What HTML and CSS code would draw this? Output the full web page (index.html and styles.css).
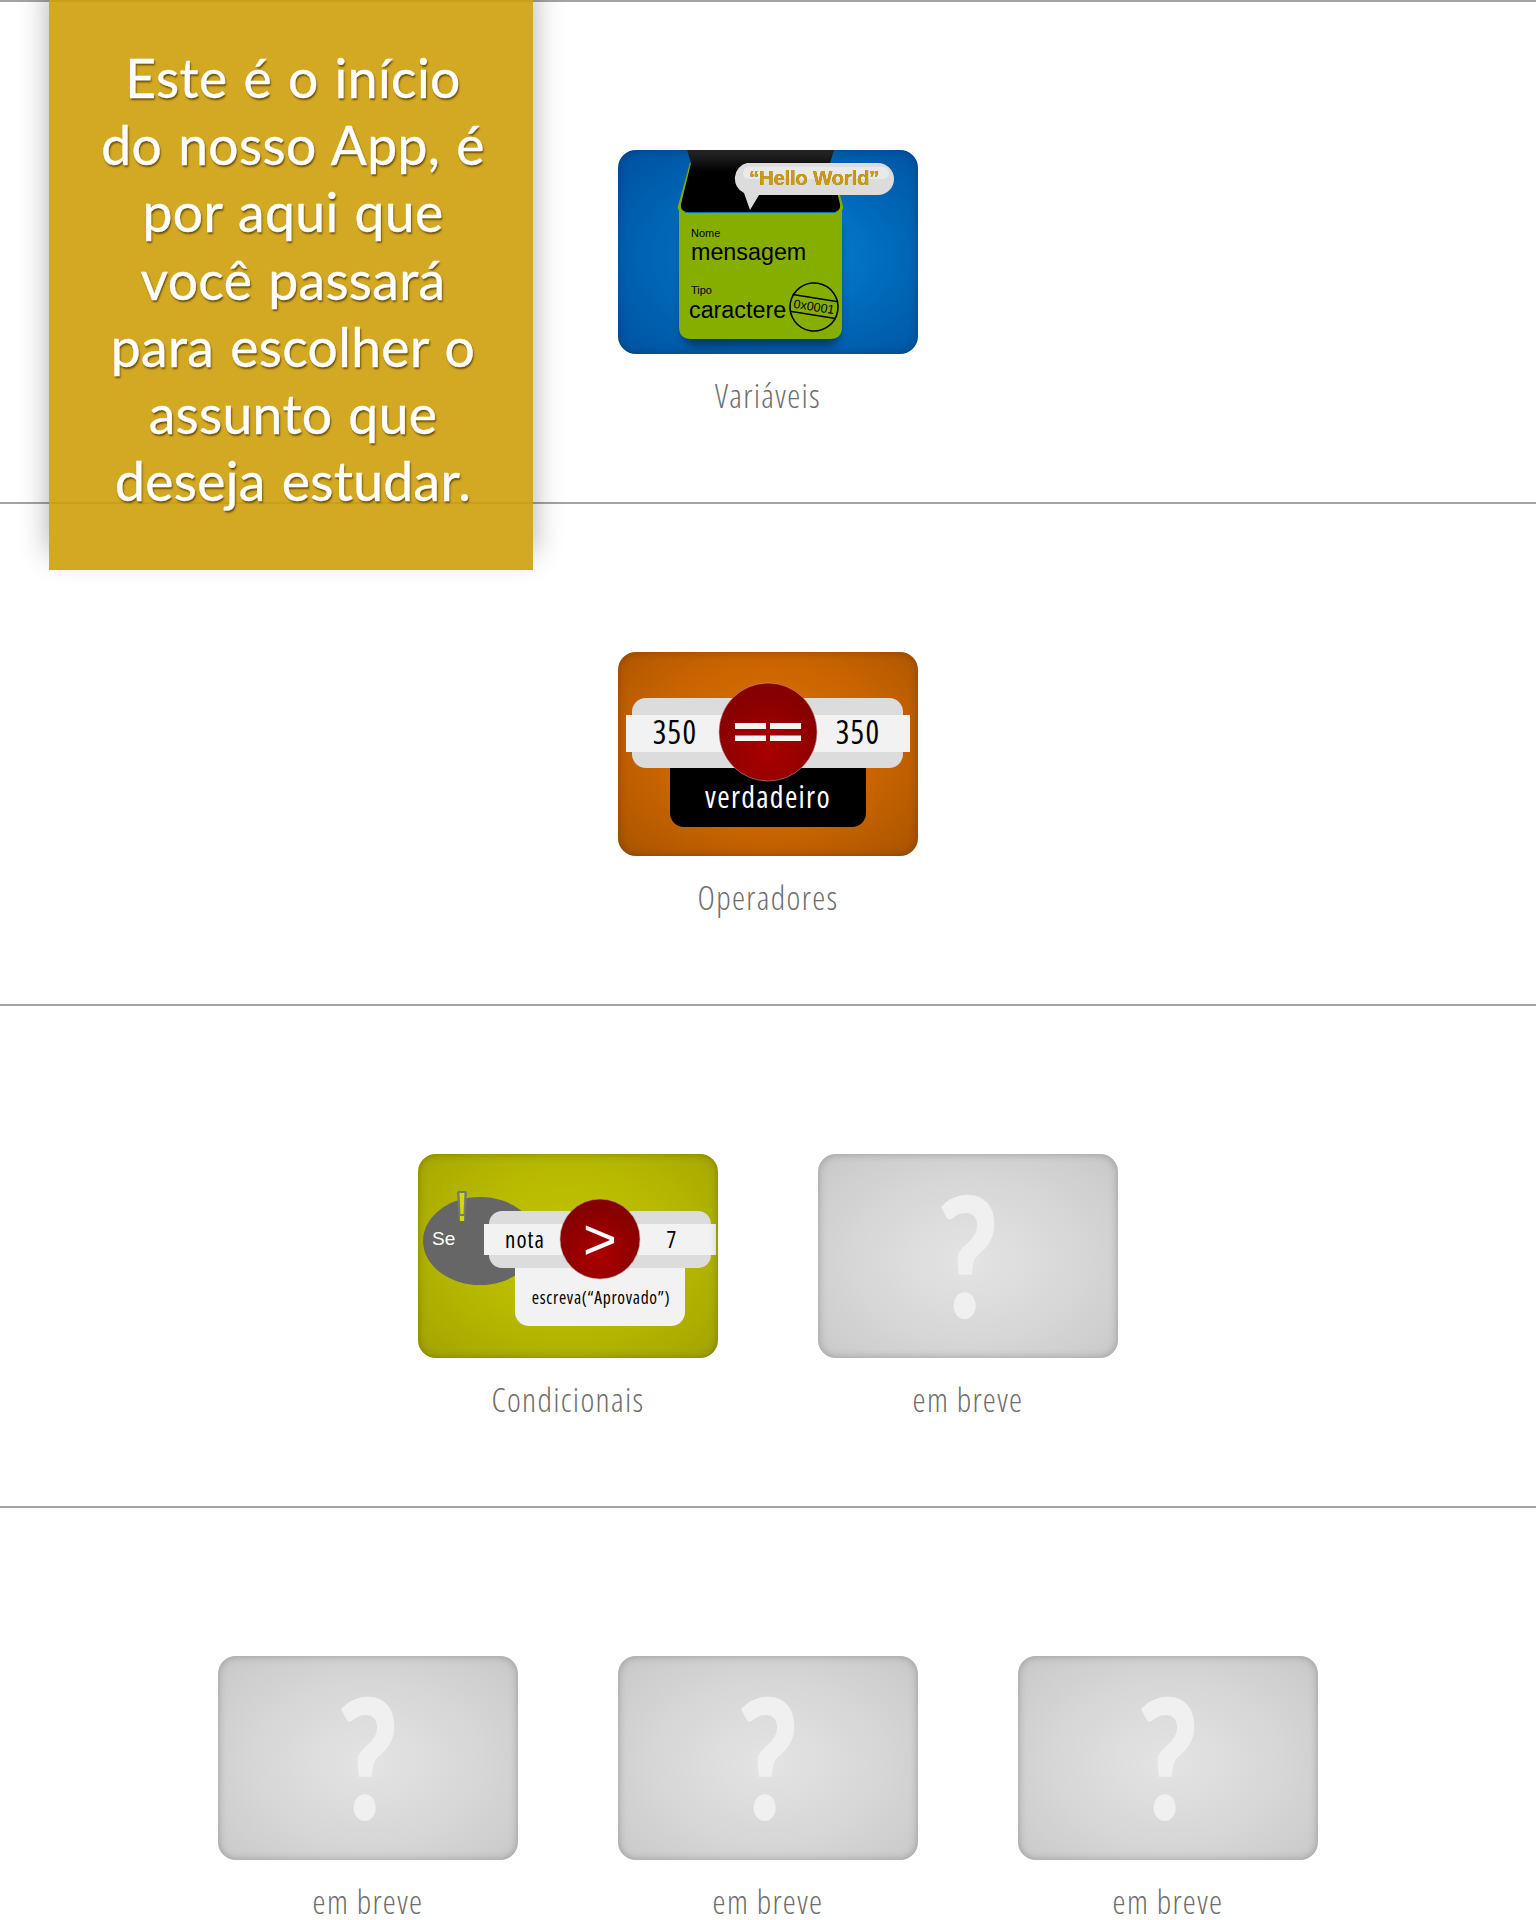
FILE: index.html
```html
<!DOCTYPE html>
<html lang="pt">
<head>
<meta charset="utf-8">
<title>Início</title>
<link rel="stylesheet" href="styles.css">
</head>
<body>
<div class="page">
  <aside class="intro">Este é o início<br>do nosso App, é<br>por aqui que<br>você passará<br>para escolher o<br>assunto que<br>deseja estudar.</aside>

  <section class="row">
    <div class="item">
      <div class="thumb thumb-blue">
        <svg class="art" viewBox="0 0 300 204">
          <defs>
            <linearGradient id="sackTop" x1="0" y1="0" x2="0" y2="1"><stop offset="0" stop-color="#2a2a2a"/><stop offset=".35" stop-color="#000"/></linearGradient>
            <filter id="soft" x="-20%" y="-20%" width="140%" height="140%"><feGaussianBlur stdDeviation="4"/></filter>
          </defs>
          <rect x="64" y="72" width="158" height="124" rx="14" fill="#002a55" opacity=".75" filter="url(#soft)"/>
          <path d="M72 13 L60 56 Q59 60 63 62 L222 62 Q226 60 225 56 L215 20 L200 20 L72 13 Z" fill="#86ae00"/>
          <path d="M69 0 L216 0 L212 13 L222 54 Q223 60 217 62 L68 62 Q62 60 63 54 L73 13 Z" fill="url(#sackTop)"/>
          <path d="M61 58 Q63 63 72 63 L213 63 Q222 63 224 58 L224 177 Q224 189 212 189 L73 189 Q61 189 61 177 Z" fill="#86ae00"/>
          <path d="M129 13 L260 13 A16 16 0 0 1 260 45 L141 45 L132 60 L126 43 A16 16 0 0 1 129 13 Z" fill="#dcdcdc"/>
          <rect x="125" y="17" width="146" height="12" rx="6" fill="#e9e9e9"/>
          <text class="t-sans t-hello" x="196" y="35">“Hello World”</text>
          <text class="t-sans t-small" x="73" y="87">Nome</text>
          <text class="t-sans t-big" x="73" y="110">mensagem</text>
          <text class="t-sans t-small" x="73" y="144">Tipo</text>
          <text class="t-sans t-big" x="71" y="168">caractere</text>
          <g transform="rotate(9 196 157)">
            <circle cx="196" cy="157" r="24" fill="none" stroke="#000" stroke-width="1.6"/>
            <path d="M173 148 H219 M173 165 H219" stroke="#000" stroke-width="1.5"/>
            <text class="t-narrow t-addr" x="196" y="161">0x0001</text>
          </g>
        </svg>
      </div>
      <p class="label">Variáveis</p>
    </div>
  </section>

  <section class="row">
    <div class="item">
      <div class="thumb thumb-orange">
        <svg class="art" viewBox="0 0 300 204">
          <defs>
            <radialGradient id="red" cx=".5" cy=".7" r=".6"><stop offset="0" stop-color="#ab0000"/><stop offset="1" stop-color="#860000"/></radialGradient>
          </defs>
          <path d="M52 110 H248 V161 A14 14 0 0 1 234 175 H66 A14 14 0 0 1 52 161 Z" fill="#000"/>
          <rect x="14" y="46" width="271" height="70" rx="14" fill="#dcdcdc"/>
          <rect x="8" y="63" width="284" height="37" fill="#f2f2f2"/>
          <circle class="disc" cx="150" cy="80" r="49" fill="url(#red)"/>
          <path d="M117 71 H148 V77 H117 Z M152 71 H183 V77 H152 Z M117 83.500 H148 V89 H117 Z M152 83.500 H183 V89 H152 Z" fill="#f4f4f4"/>
          <text class="t-cond t-num" x="57" y="92">350</text>
          <text class="t-cond t-num" x="240" y="92">350</text>
          <text class="t-cond t-true" x="150" y="156">verdadeiro</text>
        </svg>
      </div>
      <p class="label">Operadores</p>
    </div>
  </section>

  <section class="row">
    <div class="item">
      <div class="thumb thumb-olive">
        <svg class="art" viewBox="0 0 300 204">
          <ellipse cx="62" cy="87" rx="57" ry="44" fill="#666"/>
          <path d="M41 37 H47 Q49 37 49 39 L47 67 H41 L39 39 Q39 37 41 37 Z" fill="#777"/>
          <path d="M41.500 39 H46.500 L45.500 60 H42.500 Z M42 62 H46 V67 H42 Z" fill="#d6d900"/>
          <text class="t-sans t-se" x="14" y="91">Se</text>
          <path d="M97 110 H267 V158 A14 14 0 0 1 253 172 H111 A14 14 0 0 1 97 158 Z" fill="#f2f2f2"/>
          <rect x="71" y="57" width="222" height="57" rx="13" fill="#dcdcdc"/>
          <rect x="66" y="70" width="232" height="31" fill="#f2f2f2"/>
          <circle class="disc" cx="182" cy="85" r="40" fill="url(#red)"/>
          <text class="t-sans t-gt" x="182" y="105">&gt;</text>
          <text class="t-cond t-nota" x="107" y="94">nota</text>
          <text class="t-cond t-nota" x="254" y="94">7</text>
          <text class="t-cond t-print" x="183" y="150">escreva(“Aprovado”)</text>
        </svg>
      </div>
      <p class="label">Condicionais</p>
    </div>
    <div class="item">
      <div class="thumb thumb-gray"><span class="mark">?</span></div>
      <p class="label">em breve</p>
    </div>
  </section>

  <section class="row">
    <div class="item">
      <div class="thumb thumb-gray"><span class="mark">?</span></div>
      <p class="label">em breve</p>
    </div>
    <div class="item">
      <div class="thumb thumb-gray"><span class="mark">?</span></div>
      <p class="label">em breve</p>
    </div>
    <div class="item">
      <div class="thumb thumb-gray"><span class="mark">?</span></div>
      <p class="label">em breve</p>
    </div>
  </section>
</div>
</body>
</html>
```

FILE: styles.css
```css
* { box-sizing: border-box; }
html, body { margin: 0; padding: 0; background: #fff; }
.page { position: relative; height: 1920px; }

.row {
  height: 502px;
  border-top: 2px solid #a3a3a3;
  padding-top: 148px;
  display: flex;
  justify-content: center;
  gap: 100px;
}
.row:last-child { height: 414px; }
.item { width: 300px; }

.thumb {
  position: relative;
  width: 300px;
  height: 204px;
  border-radius: 18px;
  display: flex;
  justify-content: center;
}
.thumb::after {
  content: "";
  position: absolute;
  inset: 0;
  border-radius: 18px;
  box-shadow: inset 0 0 8px rgba(0, 0, 0, .26);
  pointer-events: none;
}
.thumb-blue { background: radial-gradient(ellipse at 55% 52%, #0a84d4 0%, #0068b8 50%, #00509f 100%); }
.thumb-orange { background: radial-gradient(ellipse at 50% 45%, #dd7000 0%, #cc6500 50%, #a85400 100%); }
.thumb-olive { background: radial-gradient(ellipse at 50% 45%, #c2c600 0%, #b6b900 50%, #a3a300 100%); }
.thumb-gray { background: radial-gradient(ellipse at 50% 52%, #e4e4e4 0%, #d6d6d6 55%, #c8c8c8 100%); }

.art { display: block; width: 300px; height: 204px; border-radius: 18px; }

.label {
  margin: 24px 0 0;
  text-align: center;
  font-family: "Open Sans", sans-serif;
  font-stretch: 75%;
  font-weight: 300;
  font-size: 33px;
  line-height: 36px;
  letter-spacing: 1.3px;
  color: #6e6e6e;
}

.mark {
  font-family: Lato, sans-serif;
  font-weight: 900;
  font-size: 168px;
  line-height: 198px;
  height: 198px;
  transform: scaleX(.8);
  color: #f0f0f0;
}

.intro {
  position: absolute;
  left: 49px;
  top: 0;
  width: 484px;
  height: 570px;
  padding: 44px 0 0 4px;
  background: rgba(206, 158, 10, .9);
  box-shadow: 0 -16px 28px rgba(0, 0, 0, .32);
  font-family: Lato, sans-serif;
  font-size: 53.500px;
  line-height: 67.2px;
  letter-spacing: .3px;
  word-spacing: 2px;
  text-align: center;
  color: #fff;
  -webkit-text-stroke: .4px #fff;
  text-shadow: 1px 2px 2px rgba(80, 60, 0, .85);
}

.disc { stroke: rgba(190, 165, 160, .55); stroke-width: 1px; }

.t-sans { font-family: "Liberation Sans", sans-serif; }
.t-narrow { font-family: "Liberation Sans Narrow", "Liberation Sans", sans-serif; }
.t-cond { font-family: "Open Sans", sans-serif; font-stretch: 75%; text-anchor: middle; fill: #000; }

.t-hello { font-size: 20.500px; font-weight: 700; letter-spacing: -.3px; text-anchor: middle; fill: #d09a05; filter: drop-shadow(.7px .7px 0 #5f5a40); }
.t-small { font-size: 11px; fill: #000; }
.t-big { font-size: 23.300px; fill: #000; }
.t-addr { font-size: 12.500px; text-anchor: middle; fill: #000; }
.t-num { font-size: 32px; font-weight: 500; letter-spacing: 1.2px; }
.t-true { font-size: 30px; font-weight: 500; letter-spacing: 1.3px; fill: #fff; }
.t-se { font-size: 19px; fill: #fff; }
.t-gt { font-size: 58px; text-anchor: middle; fill: #fff; }
.t-nota { font-size: 23px; font-weight: 500; letter-spacing: 1px; }
.t-print { font-size: 17.500px; font-weight: 500; letter-spacing: .7px; }
```
